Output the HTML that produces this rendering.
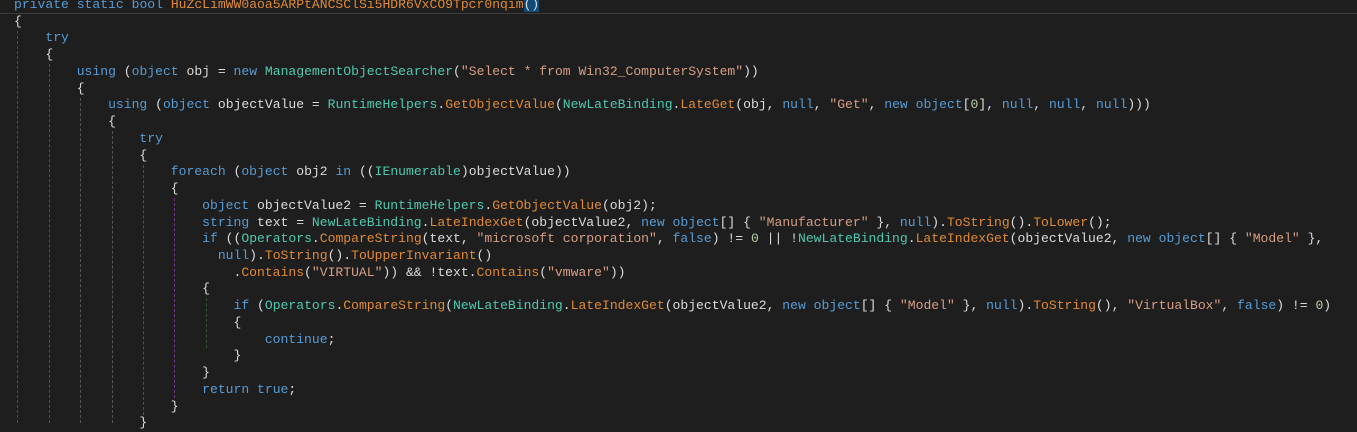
<!DOCTYPE html>
<html><head><meta charset="utf-8"><style>
html,body{margin:0;padding:0;background:#1e1e1e;width:1357px;height:423px;overflow:hidden;}
.top{position:absolute;left:0;top:0;width:1357px;height:13px;background:#1e1e1e;border-bottom:1px solid #3c3c3c;}
pre{position:absolute;left:14px;top:-3px;margin:0;font-family:"Liberation Mono",monospace;font-size:13.07px;line-height:16.74px;color:#dcdcdc;}
.k{color:#569cd6}.c{color:#4ec9b0}.m{color:#e08a34}.s{color:#d69d85}.n{color:#b5cea8}
.sel{background:#0e4a7a}
.g{position:absolute;width:0;border-left:1px dashed;}
</style></head><body>
<div class="top"></div>
<div class="g" style="left:17px;top:31px;height:392px;border-color:#2f5576"></div>
<div class="g" style="left:49px;top:64px;height:359px;border-color:#7a4038"></div>
<div class="g" style="left:80px;top:98px;height:325px;border-color:#555"></div>
<div class="g" style="left:112px;top:131px;height:292px;border-color:#555"></div>
<div class="g" style="left:143px;top:165px;height:250px;border-color:#7a4038"></div>
<div class="g" style="left:174px;top:198px;height:200px;border-color:#6a3a8a"></div>
<div class="g" style="left:206px;top:298px;height:50px;border-color:#2e5a2e"></div>
<pre><span class="k">private</span> <span class="k">static</span> <span class="k">bool</span> <span class="m">HuZcLimWW0aoa5ARPtANCSClSi5HDR6VxCO9Tpcr0nqim</span><span class="sel">()</span>
{
    <span class="k">try</span>
    {
        <span class="k">using</span> (<span class="k">object</span> obj = <span class="k">new</span> <span class="c">ManagementObjectSearcher</span>(<span class="s">"Select * from Win32_ComputerSystem"</span>))
        {
            <span class="k">using</span> (<span class="k">object</span> objectValue = <span class="c">RuntimeHelpers</span>.<span class="m">GetObjectValue</span>(<span class="c">NewLateBinding</span>.<span class="m">LateGet</span>(obj, <span class="k">null</span>, <span class="s">"Get"</span>, <span class="k">new</span> <span class="k">object</span>[<span class="n">0</span>], <span class="k">null</span>, <span class="k">null</span>, <span class="k">null</span>)))
            {
                <span class="k">try</span>
                {
                    <span class="k">foreach</span> (<span class="k">object</span> obj2 <span class="k">in</span> ((<span class="c">IEnumerable</span>)objectValue))
                    {
                        <span class="k">object</span> objectValue2 = <span class="c">RuntimeHelpers</span>.<span class="m">GetObjectValue</span>(obj2);
                        <span class="k">string</span> text = <span class="c">NewLateBinding</span>.<span class="m">LateIndexGet</span>(objectValue2, <span class="k">new</span> <span class="k">object</span>[] { <span class="s">"Manufacturer"</span> }, <span class="k">null</span>).<span class="m">ToString</span>().<span class="m">ToLower</span>();
                        <span class="k">if</span> ((<span class="c">Operators</span>.<span class="m">CompareString</span>(text, <span class="s">"microsoft corporation"</span>, <span class="k">false</span>) != <span class="n">0</span> || !<span class="c">NewLateBinding</span>.<span class="m">LateIndexGet</span>(objectValue2, <span class="k">new</span> <span class="k">object</span>[] { <span class="s">"Model"</span> },
                          <span class="k">null</span>).<span class="m">ToString</span>().<span class="m">ToUpperInvariant</span>()
                            .<span class="m">Contains</span>(<span class="s">"VIRTUAL"</span>)) &amp;&amp; !text.<span class="m">Contains</span>(<span class="s">"vmware"</span>))
                        {
                            <span class="k">if</span> (<span class="c">Operators</span>.<span class="m">CompareString</span>(<span class="c">NewLateBinding</span>.<span class="m">LateIndexGet</span>(objectValue2, <span class="k">new</span> <span class="k">object</span>[] { <span class="s">"Model"</span> }, <span class="k">null</span>).<span class="m">ToString</span>(), <span class="s">"VirtualBox"</span>, <span class="k">false</span>) != <span class="n">0</span>)
                            {
                                <span class="k">continue</span>;
                            }
                        }
                        <span class="k">return</span> <span class="k">true</span>;
                    }
                }
</pre>
</body></html>
